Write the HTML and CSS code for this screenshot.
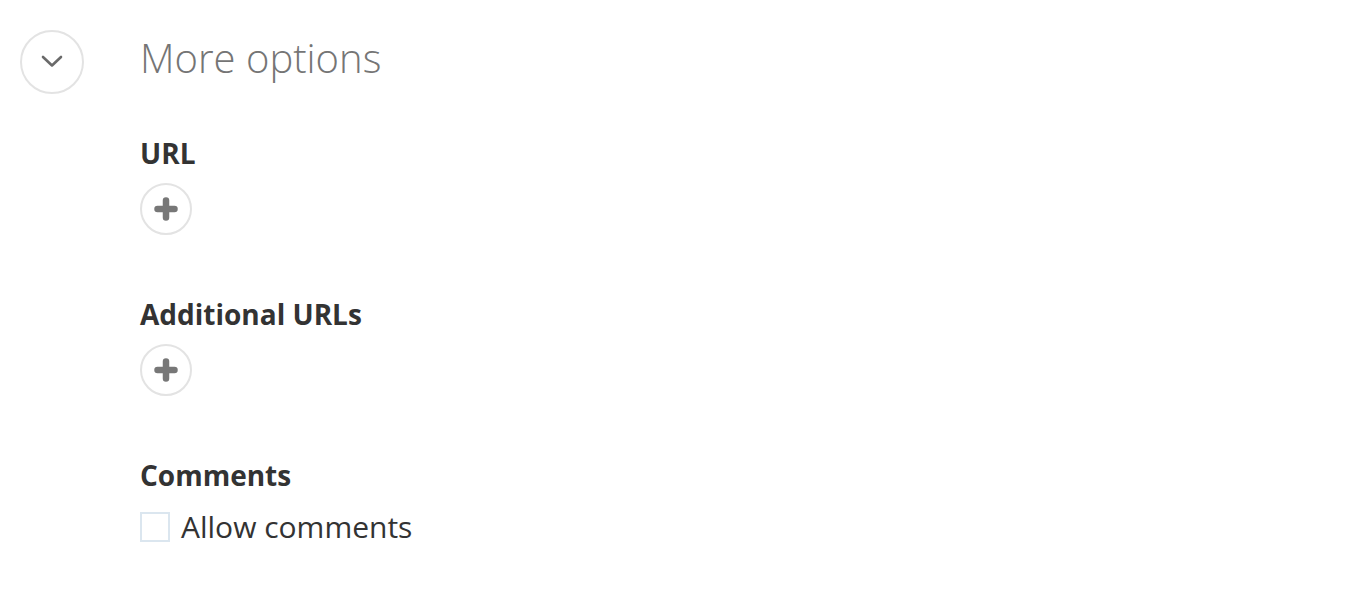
FILE: index.html
```html
<!DOCTYPE html>
<html>
<head>
<meta charset="utf-8">
<link rel="stylesheet" href="styles.css">
</head>
<body>
<div class="page">
  <div class="header">
    <button class="toggle" aria-label="Collapse">
      <svg width="24" height="14" viewBox="0 0 24 14"><path d="M3 2 L12 10.5 L21 2" fill="none" stroke="#6a6a6a" stroke-width="2.6" stroke-linecap="round" stroke-linejoin="round"/></svg>
    </button>
    <h2 class="title">More options</h2>
  </div>
  <div class="content">
    <section class="field">
      <h3 class="label">URL</h3>
      <button class="add" aria-label="Add URL">
        <svg width="24" height="24" viewBox="0 0 24 24"><path d="M12 3.5 V20.5 M3.5 12 H20.5" stroke="#777" stroke-width="6.5" stroke-linecap="round"/></svg>
      </button>
    </section>
    <section class="field">
      <h3 class="label">Additional URLs</h3>
      <button class="add" aria-label="Add additional URL">
        <svg width="24" height="24" viewBox="0 0 24 24"><path d="M12 3.5 V20.5 M3.5 12 H20.5" stroke="#777" stroke-width="6.5" stroke-linecap="round"/></svg>
      </button>
    </section>
    <section class="field">
      <h3 class="label">Comments</h3>
      <label class="check"><span class="box"></span><span class="check-text">Allow comments</span></label>
    </section>
  </div>
</div>
</body>
</html>
```
FILE: styles.css
```css
* { box-sizing: border-box; }
html, body { margin: 0; padding: 0; background: #fff; }
body { font-family: "Open Sans", "Liberation Sans", sans-serif; color: #333; }
.page { padding: 30px 0 0 20px; }
.header { display: flex; align-items: flex-start; gap: 56px; }
.toggle {
  width: 64px; height: 64px; border-radius: 50%;
  border: 2px solid #e3e3e3; background: #fff;
  display: flex; align-items: center; justify-content: center; padding: 0;
  flex: none;
}
.title { margin: 0; font-weight: 300; font-size: 40px; color: #757575; line-height: 56px; }
.content { padding-left: 120px; padding-top: 40px; }
.field { margin-bottom: 60px; }
.label { margin: 0 0 11px; font-weight: 700; font-size: 28px; line-height: 38px; color: #333; }
.add {
  width: 52px; height: 52px; border-radius: 50%;
  border: 2px solid #e3e3e3; background: #fff; padding: 0;
  display: flex; align-items: center; justify-content: center;
}
.check { display: flex; align-items: center; gap: 11px; margin-top: 15px; }
.box { width: 30px; height: 30px; border: 2px solid #dbe6ef; background: #fff; flex: none; }
.check-text { font-size: 30px; color: #333; line-height: 36px; }
```
